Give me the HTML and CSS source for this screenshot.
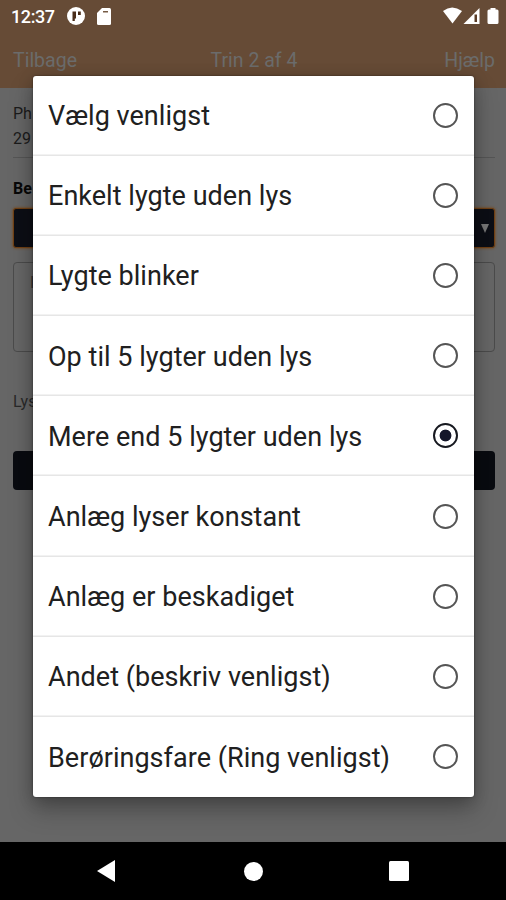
FILE: index.html
```html
<!DOCTYPE html>
<html lang="da">
<head>
<meta charset="utf-8">
<title>Trin 2 af 4</title>
<link rel="stylesheet" href="styles.css">
</head>
<body>
<div class="screen">
  <header class="top">
    <div class="status">
      <span class="clock">12:37</span>
      <svg class="notify" width="18" height="18" viewBox="0 0 18 18"><circle cx="9" cy="9" r="9" fill="#fff"/><path d="M5.500 4.500H9v7H7.800v2.500H5.500zM11 4.500h2.800v3.500H11z" fill="#4a2d1a"/></svg>
      <svg class="sd" width="14" height="17" viewBox="0 0 14 17"><path d="M5 0h7.500Q14 0 14 1.500v14q0 1.500-1.500 1.500h-11Q0 17 0 15.500V5z" fill="#fff"/><path d="M6 3h5v1.500H6z" fill="#765b45"/></svg>
      <svg class="signals" width="56" height="18" viewBox="0 0 56 18"><path d="M0 4Q9-3 19 4L9.500 16.500z" fill="#fff"/><path d="M20.500 17L36.500 1v16z" fill="#fff"/><path d="M31.500 7.500h2.500v7.500h-2.500z" fill="#5b3c27"/><path d="M47.500 1h5v1.500H54q1.500 0 1.500 1.500v11.500Q55.500 17 54 17h-8q-1.500 0-1.500-1.500V4q0-1.500 1.500-1.500h1.500z" fill="#fff"/></svg>
    </div>
    <nav class="bar"><span>Tilbage</span><span class="title">Trin 2 af 4</span><span class="help">Hjælp</span></nav>
  </header>
  <main class="page">
    <div class="product">Ph<br>29</div>
    <div class="label">Be</div>
    <div class="select"><svg width="8" height="9" viewBox="0 0 8 9"><path d="M0 0h8L4 9z" fill="#777"/></svg></div>
    <div class="note">I</div>
    <div class="caption">Lys</div>
    <div class="button"></div>
  </main>
  <footer class="android">
    <svg width="18" height="22" viewBox="0 0 18 22"><path d="M0 11L18 0v22z" fill="#fff"/></svg>
    <svg width="19" height="19" viewBox="0 0 19 19"><circle cx="9.500" cy="9.500" r="9.500" fill="#fff"/></svg>
    <svg width="20" height="20" viewBox="0 0 20 20"><rect width="20" height="20" rx="1.500" fill="#fff"/></svg>
  </footer>
  <div class="dialog">
    <label class="option"><span>Vælg venligst</span><i class="radio"></i></label>
    <label class="option"><span>Enkelt lygte uden lys</span><i class="radio"></i></label>
    <label class="option"><span>Lygte blinker</span><i class="radio"></i></label>
    <label class="option"><span>Op til 5 lygter uden lys</span><i class="radio"></i></label>
    <label class="option"><span>Mere end 5 lygter uden lys</span><i class="radio checked"></i></label>
    <label class="option"><span>Anlæg lyser konstant</span><i class="radio"></i></label>
    <label class="option"><span>Anlæg er beskadiget</span><i class="radio"></i></label>
    <label class="option"><span>Andet (beskriv venligst)</span><i class="radio"></i></label>
    <label class="option"><span>Berøringsfare (Ring venligst)</span><i class="radio"></i></label>
  </div>
</div>
</body>
</html>
```
FILE: styles.css
```css
* { box-sizing: border-box; }
body { margin: 0; font-family: Roboto, sans-serif; }
svg { display: block; flex: none; }
.screen { position: relative; width: 506px; height: 900px; background: #666; display: flex; flex-direction: column; overflow: hidden; }
.top { height: 88px; flex: none; background: #664b36; }
.status { height: 32px; display: flex; align-items: center; padding: 0 8px 0 11px; }
.clock { color: #fff; font-size: 18px; font-weight: 500; width: 56px; letter-spacing: -.4px; }
.notify { margin-right: 12px; }
.signals { margin-left: auto; margin-right: -1px; }
.bar { display: grid; grid-template-columns: 1fr 1fr 1fr; padding: 17px 11px 0 13px; color: #6b6b6b; font-size: 19.5px; line-height: 24px; }
.title { text-align: center; }
.help { text-align: right; }
.page { flex: 1; padding: 13px 11px 0 13px; color: #1b1b1b; font-size: 16px; }
.product { height: 57px; line-height: 25px; border-bottom: 1px solid #555; }
.label { margin-top: 20px; height: 30px; line-height: 22px; font-weight: 700; color: #080808; }
.select { height: 40px; background: #0c0e15; border: 1px solid #704014; border-radius: 3px; box-shadow: 0 0 3px #804000; display: flex; align-items: center; justify-content: flex-end; padding-right: 5px; }
.note { margin-top: 14px; height: 90px; border: 1px solid #4b4b4b; border-radius: 4px; padding: 10px 16px; color: #333; }
.caption { margin-top: 39px; height: 60px; line-height: 22px; color: #292929; }
.button { height: 39px; background: #090b10; border-radius: 4px; }
.android { height: 58px; flex: none; background: #000; display: flex; align-items: center; padding-left: 97px; gap: 130px; }
.android svg:nth-child(2) { margin: 0 -4px 0 -1px; }
.dialog { position: absolute; left: 33px; top: 75.500px; width: 441px; height: 721px; background: #fff; border-radius: 3px; box-shadow: 0 0 2px rgba(0,0,0,.5), 0 13px 24px rgba(0,0,0,.25), 0 3px 16px rgba(0,0,0,.2); display: flex; flex-direction: column; }
.option { height: 80.200px; flex: none; display: flex; align-items: center; justify-content: space-between; padding: 1px 16px 0 15px; font-size: 27px; font-weight: 400; letter-spacing: .03px; color: #202020; box-shadow: inset 0 -1.500px #e6e6e6; white-space: nowrap; }
.option:last-child { box-shadow: none; }
.radio { width: 25px; height: 25px; flex: none; margin-top: -2px; border: 2px solid #555; border-radius: 50%; }
.checked { border: 2px solid #171920; background: radial-gradient(circle, #15172a 5.500px, #fff 6.300px); }
```
